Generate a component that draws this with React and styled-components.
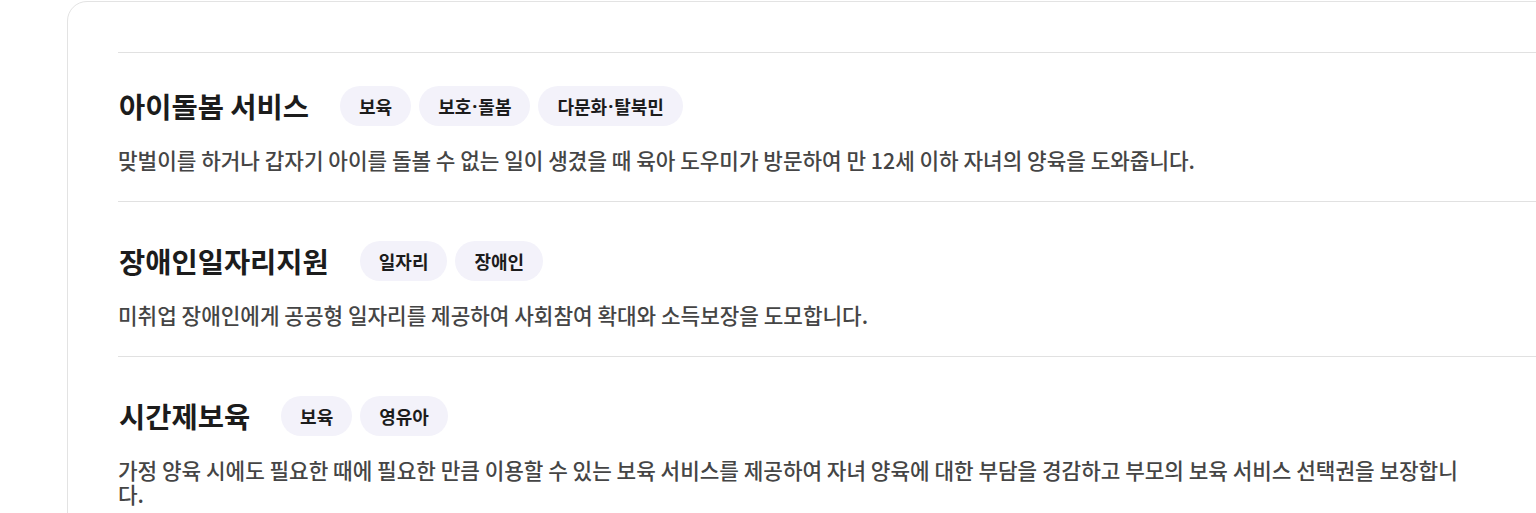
import React from 'react'
import styled, { createGlobalStyle } from 'styled-components'

const GlobalStyle = createGlobalStyle`
  body {
    margin: 0;
    background: #fff;
    overflow: hidden;
    font-family: "Noto Sans CJK KR", "Noto Sans", sans-serif;
  }
`

const Page = styled.div`
  padding: 1px 0 0 67px;
`

const Card = styled.section`
  width: 1520px;
  box-sizing: border-box;
  border: 1px solid #e3e3e3;
  border-radius: 20px;
  padding: 50px 50px 40px;
`

const Item = styled.div`
  border-top: 1px solid #e1e1e1;
  padding: ${(p) => (p.$first ? '33px' : '39px')} 0 29px;
`

const Head = styled.div`
  display: flex;
  align-items: center;
  gap: 8px;
`

const Title = styled.h3`
  margin: 0 23px 0 1px;
  font-size: 28.5px;
  line-height: 40px;
  font-weight: 700;
  color: #1c1c1c;
`

const Tag = styled.span`
  height: 40px;
  padding: 0 19px;
  border-radius: 20px;
  background: #f3f2fa;
  color: #1c1c1c;
  font-size: 18px;
  font-weight: 700;
  display: inline-flex;
  align-items: center;
`

// the CJK font puts wide gaps around the middle dot, the latin one does not
const Dot = styled.span`
  font-family: "Noto Sans", sans-serif;
  margin: 0 1px;
`

const Desc = styled.p`
  margin: 22px 0 0;
  max-width: 1358px;
  font-size: 21.3px;
  font-weight: 500;
  line-height: 24px;
  color: #454545;
`

const services = [
  {
    title: '아이돌봄 서비스',
    tags: ['보육', '보호·돌봄', '다문화·탈북민'],
    desc: '맞벌이를 하거나 갑자기 아이를 돌볼 수 없는 일이 생겼을 때 육아 도우미가 방문하여 만 12세 이하 자녀의 양육을 도와줍니다.',
  },
  {
    title: '장애인일자리지원',
    tags: ['일자리', '장애인'],
    desc: '미취업 장애인에게 공공형 일자리를 제공하여 사회참여 확대와 소득보장을 도모합니다.',
  },
  {
    title: '시간제보육',
    tags: ['보육', '영유아'],
    desc: '가정 양육 시에도 필요한 때에 필요한 만큼 이용할 수 있는 보육 서비스를 제공하여 자녀 양육에 대한 부담을 경감하고 부모의 보육 서비스 선택권을 보장합니다.',
  },
]

const TagLabel = ({ text }) => {
  const parts = text.split('·')
  return parts.map((p, i) => (
    <React.Fragment key={i}>
      {i > 0 && <Dot>·</Dot>}
      {p}
    </React.Fragment>
  ))
}

export default function App() {
  return (
    <Page>
      <GlobalStyle />
      <Card>
        {services.map((s, idx) => (
          <Item key={idx} $first={idx === 0}>
            <Head>
              <Title>{s.title}</Title>
              {s.tags.map((t) => (
                <Tag key={t}>
                  <TagLabel text={t} />
                </Tag>
              ))}
            </Head>
            <Desc>{s.desc}</Desc>
          </Item>
        ))}
      </Card>
    </Page>
  )
}
